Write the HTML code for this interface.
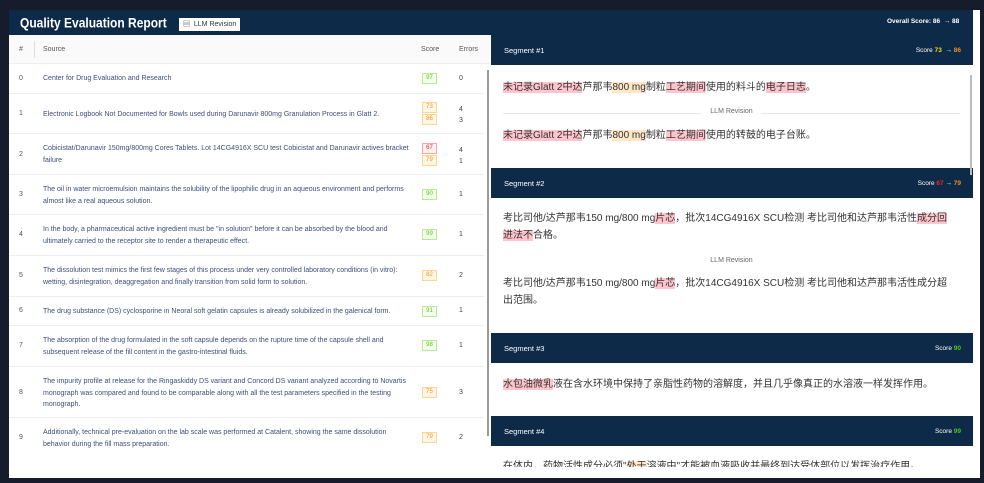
<!DOCTYPE html>
<html><head><meta charset="utf-8"><style>
*{box-sizing:border-box;margin:0;padding:0}
body{width:984px;height:483px;background:#161c2b;position:relative;overflow:hidden;font-family:"Liberation Sans","Noto Sans CJK SC",sans-serif}
.frame{position:absolute;left:9px;top:10px;width:971px;height:468px;background:#fff}
.top{position:absolute;left:9px;top:10px;width:964px;height:25px;background:#0d2b48}
.title{position:absolute;left:20px;top:15px;color:#fff;font-weight:bold;font-size:12px;transform:scaleY(1.12);transform-origin:left top}
.badge{position:absolute;left:179px;top:18px;width:61px;height:13px;background:#fff;font-size:7px;color:#333;line-height:13px;padding-left:4px}
.overall{position:absolute;left:887px;top:18px;color:#fff;font-weight:bold;font-size:6.5px}
.th{position:absolute;left:9px;top:35px;width:481px;height:29px;background:#fafafa;border-bottom:1px solid #eee;font-size:7px;color:#555}
.th span{position:absolute;top:11px}
.row{position:absolute;left:9px;width:475px;border-bottom:1px solid #eee;font-size:7px;color:#3c4e7a}
.row .n{position:absolute;left:10px;color:#555}
.row .t{position:absolute;left:34px;width:372px;line-height:11.5px}
.row .e{position:absolute;left:450px;color:#444}
.sc{position:absolute;left:413px;width:15px;height:11px;border:1px solid;font-size:6px;text-align:center;line-height:9px}
.g{border-color:#b7eb8f;background:#f6ffed;color:#52c41a}
.o{border-color:#ffd591;background:#fff7e6;color:#fa8c16}
.r{border-color:#ffa39e;background:#fff1f0;color:#f5222d}
.sbar{position:absolute;left:487px;top:70px;width:2px;height:366px;background:#999}
.sh{position:absolute;left:491px;width:482px;background:#0d2b48;color:#fff;font-size:7.5px}
.sh .l{position:absolute;left:13px}
.sh .s{position:absolute;right:12px;font-size:6.5px}
.cj{position:absolute;left:503px;width:470px;font-size:10px;color:#333;line-height:17px;white-space:nowrap}
.p{background:#ffc4cc}.y{background:#ffe6c7}
.div{position:absolute;left:503px;width:457px;height:9px;font-size:7px;color:#666;text-align:center}
.div.ln:before{content:"";position:absolute;left:0;right:0;top:5px;border-top:1px solid #e8e8e8}
.div span{position:relative;background:#fff;padding:0 8px}
</style></head><body>
<div class="frame"></div>
<div class="top"></div>
<div class="title">Quality Evaluation Report</div>
<div class="badge">▤ &nbsp;LLM Revision</div>
<div class="overall">Overall Score: 86 &nbsp;→ 88</div>
<div class="th"><span style="left:10px">#</span><span style="left:25px;top:6px;height:17px;border-left:1px solid #ddd"></span><span style="left:34px">Source</span><span style="left:412px">Score</span><span style="left:450px">Errors</span></div>

<div class="row" style="top:64px;height:30px"><span class="n" style="top:11px">0</span><span class="t" style="top:9px">Center for Drug Evaluation and Research</span><span class="sc g" style="top:9px">97</span><span class="e" style="top:11px">0</span></div>
<div class="row" style="top:94px;height:40px"><span class="n" style="top:16px">1</span><span class="t" style="top:15px">Electronic Logbook Not Documented for Bowls used during Darunavir 800mg Granulation Process in Glatt 2.</span><span class="sc o" style="top:8px">73</span><span class="sc o" style="top:20px">86</span><span class="e" style="top:10px;line-height:11px">4<br>3</span></div>
<div class="row" style="top:134px;height:41px"><span class="n" style="top:17px">2</span><span class="t" style="top:9px">Cobicistat/Darunavir 150mg/800mg Cores Tablets. Lot 14CG4916X SCU test Cobicistat and Darunavir actives bracket failure</span><span class="sc r" style="top:9px">67</span><span class="sc o" style="top:21px">79</span><span class="e" style="top:11px;line-height:11px">4<br>1</span></div>
<div class="row" style="top:175px;height:40px"><span class="n" style="top:16px">3</span><span class="t" style="top:9px">The oil in water microemulsion maintains the solubility of the lipophilic drug in an aqueous environment and performs almost like a real aqueous solution.</span><span class="sc g" style="top:14px">90</span><span class="e" style="top:16px">1</span></div>
<div class="row" style="top:215px;height:41px"><span class="n" style="top:16px">4</span><span class="t" style="top:9px">In the body, a pharmaceutical active ingredient must be "in solution" before it can be absorbed by the blood and ultimately carried to the receptor site to render a therapeutic effect.</span><span class="sc g" style="top:14px">99</span><span class="e" style="top:16px">1</span></div>
<div class="row" style="top:256px;height:41px"><span class="n" style="top:16px">5</span><span class="t" style="top:9px">The dissolution test mimics the first few stages of this process under very controlled laboratory conditions (in vitro): wetting, disintegration, deaggregation and finally transition from solid form to solution.</span><span class="sc o" style="top:14px">82</span><span class="e" style="top:16px">2</span></div>
<div class="row" style="top:297px;height:29px"><span class="n" style="top:10px">6</span><span class="t" style="top:9px">The drug substance (DS) cyclosporine in Neoral soft gelatin capsules is already solubilized in the galenical form.</span><span class="sc g" style="top:9px">91</span><span class="e" style="top:10px">1</span></div>
<div class="row" style="top:326px;height:41px"><span class="n" style="top:16px">7</span><span class="t" style="top:9px">The absorption of the drug formulated in the soft capsule depends on the rupture time of the capsule shell and subsequent release of the fill content in the gastro-intestinal fluids.</span><span class="sc g" style="top:14px">98</span><span class="e" style="top:16px">1</span></div>
<div class="row" style="top:367px;height:51px"><span class="n" style="top:22px">8</span><span class="t" style="top:9px">The impurity profile at release for the Ringaskiddy DS variant and Concord DS variant analyzed according to Novartis monograph was compared and found to be comparable along with all the test parameters specified in the testing monograph.</span><span class="sc o" style="top:20px">75</span><span class="e" style="top:22px">3</span></div>
<div class="row" style="top:418px;height:42px;border:none"><span class="n" style="top:16px">9</span><span class="t" style="top:9px">Additionally, technical pre-evaluation on the lab scale was performed at Catalent, showing the same dissolution behavior during the fill mass preparation.</span><span class="sc o" style="top:14px">79</span><span class="e" style="top:16px">2</span></div>
<div class="sbar"></div>

<div class="sh" style="top:35px;height:30px"><span class="l" style="top:11px">Segment #1</span><span class="s" style="top:12px">Score <b style="color:#fadb14">73</b> &nbsp;→ <b style="color:#fa8c16">86</b></span></div>
<div class="cj" style="top:79px"><span class="p">未记录Glatt 2中达</span>芦那韦<span class="y">800 mg</span>制粒<span class="p">工艺期间</span>使用的料斗的<span class="p">电子日志</span>。</div>
<div class="div ln" style="top:108px"><span>LLM Revision</span></div>
<div class="cj" style="top:127px"><span class="p">未记录Glatt 2中达</span>芦那韦<span class="y">800 mg</span>制粒<span class="p">工艺期间</span>使用的转鼓的电子台账。</div>

<div class="sh" style="top:168px;height:30px"><span class="l" style="top:11px">Segment #2</span><span class="s" style="top:12px">Score <b style="color:#f5222d">67</b> → <b style="color:#fa8c16">79</b></span></div>
<div class="cj" style="top:210px">考比司他/达芦那韦150 mg/800 mg<span class="p">片芯</span>，批次14CG4916X SCU检测 考比司他和达芦那韦活性<span class="p">成分回</span><br><span class="p">进法不</span>合格。</div>
<div class="div" style="top:257px"><span style="background:none">LLM Revision</span></div>
<div class="cj" style="top:275px">考比司他/达芦那韦150 mg/800 mg<span class="p">片芯</span>，批次14CG4916X SCU检测 考比司他和达芦那韦活性成分超<br>出范围。</div>

<div class="sh" style="top:333px;height:30px"><span class="l" style="top:11px">Segment #3</span><span class="s" style="top:12px">Score <b style="color:#52c41a">90</b></span></div>
<div class="cj" style="top:376px"><span class="p">水包油微乳</span>液在含水环境中保持了亲脂性药物的溶解度，并且几乎像真正的水溶液一样发挥作用。</div>

<div class="sh" style="top:416px;height:30px"><span class="l" style="top:11px">Segment #4</span><span class="s" style="top:12px">Score <b style="color:#52c41a">99</b></span></div>
<div style="position:absolute;left:491px;top:446px;width:482px;height:21px;overflow:hidden"><div class="cj" style="left:12px;top:12px">在体内，药物活性成分必须"<span class="y">处于</span>溶液中"才能被血液吸收并最终到达受体部位以发挥治疗作用。</div></div>
<div style="position:absolute;left:970px;top:75px;width:2px;height:100px;background:#bbb"></div>
</body></html>
